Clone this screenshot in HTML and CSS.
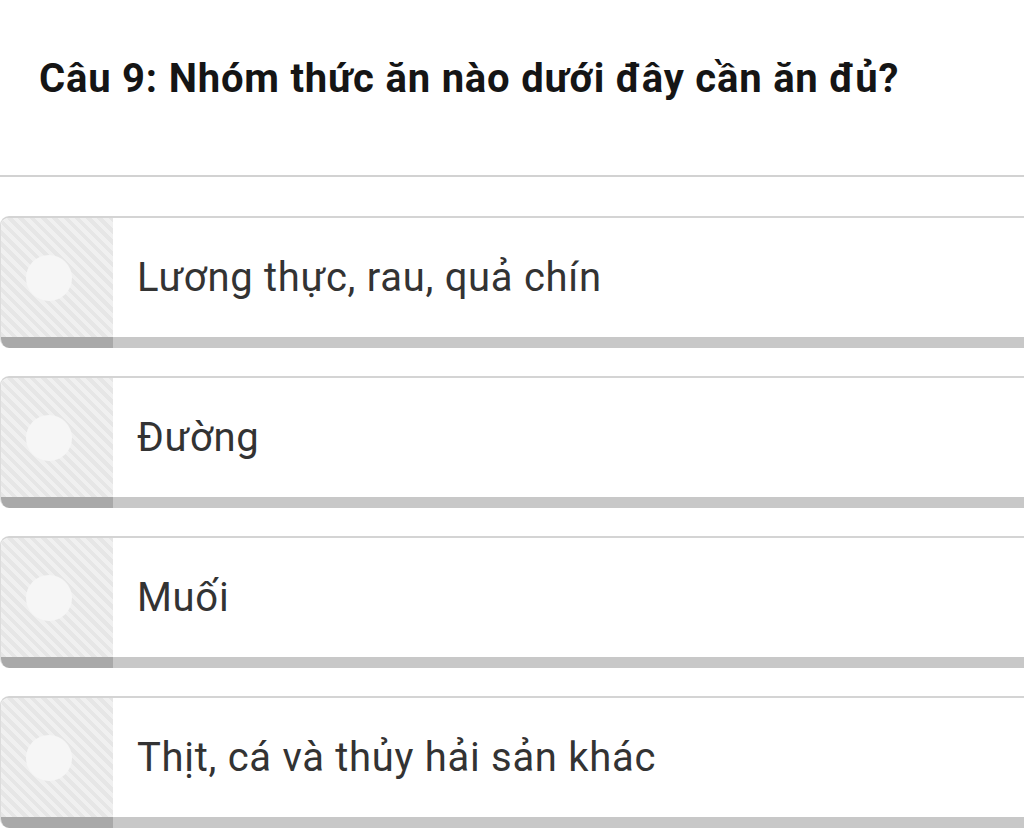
FILE: index.html
```html
<!DOCTYPE html>
<html>
  <head>
    <meta name="viewport" content="width=device-width, initial-scale=1" />
    <link rel="stylesheet" href="styles.css">
  </head>
  <body>
    <div class="question">
      <h2>Câu 9: Nhóm thức ăn nào dưới đây cần ăn đủ?</h2>
    </div>
    <div class="answers">
      <div class="option">
        <div class="mark"><span class="dot"></span></div>
        <div class="label">Lương thực, rau, quả chín</div>
      </div>
      <div class="option">
        <div class="mark"><span class="dot"></span></div>
        <div class="label">Đường</div>
      </div>
      <div class="option">
        <div class="mark"><span class="dot"></span></div>
        <div class="label">Muối</div>
      </div>
      <div class="option">
        <div class="mark"><span class="dot"></span></div>
        <div class="label">Thịt, cá và thủy hải sản khác</div>
      </div>
    </div>
  </body>
</html>
```
FILE: styles.css
```css
body {
  margin: 0;
  background-color: white;
  font-family: Roboto, "Liberation Sans", Arial, sans-serif;
  overflow: hidden;
}

.question {
  height: 177px;
  padding-left: 39px;
  border-bottom: 2px solid #d2d2d2;
  box-sizing: border-box;
  display: flex;
  align-items: center;
}

.question h2 {
  margin: 0 0 18px 0;
  font-size: 40px;
  letter-spacing: 0.8px;
  font-weight: bold;
  color: #151515;
}

.answers {
  display: flex;
  flex-direction: column;
  gap: 28px;
  padding-top: 39px;
}

.option {
  display: flex;
  width: 1060px;
  height: 132px;
  border-top: 2px solid #d4d4d4;
  border-left: 1px solid #dcdcdc;
  border-radius: 9px 0 0 9px;
  overflow: hidden;
  box-sizing: border-box;
}

.mark {
  width: 112px;
  display: flex;
  align-items: center;
  padding-left: 25px;
  box-sizing: border-box;
  border-bottom: 11px solid #a9a9a9;
  background: repeating-linear-gradient(
    45deg,
    #e6e6e6 0px,
    #e6e6e6 4px,
    #f0f0f0 4px,
    #f0f0f0 8px
  );
}

.dot {
  width: 46px;
  height: 46px;
  border-radius: 50%;
  background-color: #f6f6f6;
}

.label {
  flex: 1;
  display: flex;
  align-items: center;
  padding-left: 24px;
  border-bottom: 11px solid #c8c8c8;
  font-size: 40px;
  letter-spacing: 0.7px;
  color: #333;
}
```
